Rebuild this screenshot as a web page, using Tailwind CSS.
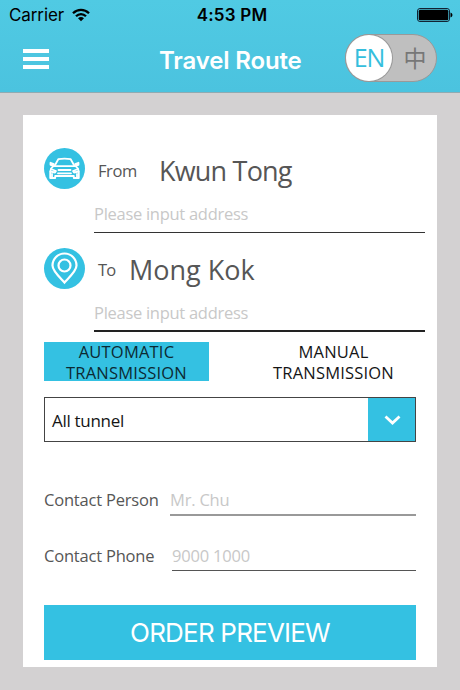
<!DOCTYPE html>
<html lang="en">
<head>
  <meta charset="UTF-8" />
  <meta name="viewport" content="width=device-width,initial-scale=1.0"/>
  <title>Travel Route</title>
  <script src="https://cdn.jsdelivr.net/npm/@tailwindcss/browser@4"></script>
</head>
<body class="w-[460px] h-[690px] overflow-hidden bg-[#d3d1d2] font-['Open_Sans','Noto_Sans_CJK_TC',sans-serif] text-[#565656] whitespace-nowrap">

  <header class="h-[93px] bg-linear-to-b from-[#50cae3] to-[#4bc3df] border-b border-[#8fabb2] font-['Inter',sans-serif]">
    <!-- Status bar -->
    <div class="h-[30px] grid grid-cols-3 items-center pl-[9px] pr-[7px] pt-px text-black text-[17px]">
      <div class="flex items-center gap-2">
        <span class="tracking-[-0.1px]">Carrier</span>
        <svg class="w-[18px] h-[14px] -mt-px" viewBox="0 0 18 14" fill="none" stroke="#000" stroke-width="2.3">
          <path d="M1 5.2C5.6.7 12.4.7 17 5.2"/>
          <path d="M4 8.3c2.9-2.9 7.1-2.9 10 0"/>
          <path d="M9 13.2 6 10.3c1.7-1.7 4.3-1.7 6 0z" fill="#000" stroke="none"/>
        </svg>
      </div>
      <span class="pl-[2px] text-center font-semibold tracking-[0.2px]">4:53 PM</span>
      <svg class="w-[36px] h-[14px] -mt-px justify-self-end" viewBox="0 0 36 14">
        <rect x=".5" y=".5" width="32" height="13" rx="2.5" fill="none" stroke="#123"/>
        <rect x="1.7" y="1.7" width="29.6" height="10.6" rx="1.5"/>
        <path d="M33.5 4.5c2.6.8 2.6 4.2 0 5z"/>
      </svg>
    </div>
    <!-- Title bar -->
    <div class="h-[62px] flex items-start">
      <button class="mt-[19px] ml-[23px] w-[26px] flex flex-col gap-1" aria-label="Menu">
        <span class="h-1 w-full bg-white"></span>
        <span class="h-1 w-full bg-white"></span>
        <span class="h-1 w-full bg-white"></span>
      </button>
      <h1 class="mt-[16px] ml-[110px] w-[143px] text-white text-[24px] leading-[30px] font-semibold tracking-[-0.15px]">Travel Route</h1>
      <button class="mt-[4px] ml-[43px] w-[92px] h-[48px] rounded-full bg-[#bfbfbf] border border-[#999] flex items-center font-['Open_Sans','Noto_Sans_CJK_TC',sans-serif]">
        <span class="w-[46px] h-[46px] rounded-full bg-white shadow-[0_0_0_1px_#999] text-[#35bedd] text-[25px] font-medium tracking-[-1px] flex items-center justify-center">EN</span>
        <span class="flex-1 text-center text-[#777] text-[23px] leading-[46px] pl-[2px]">中</span>
      </button>
    </div>
  </header>

  <main class="mt-[22px] mx-[23px] h-[552px] bg-white pt-[33px] pl-[21px]">
    <!-- From -->
    <section class="h-[99px]">
      <div class="h-[42px] flex items-center">
        <svg class="w-[41px] h-[41px] -mt-px shrink-0" viewBox="0 0 41 41" fill="none" stroke="#fff" stroke-linejoin="round" stroke-linecap="round">
          <circle cx="20.5" cy="20.5" r="20.5" fill="#34c1e2" stroke="none"/>
          <g stroke-width="1.8">
            <path d="M10.5 18l3.800-6.800q6.200-1 12.400 0l3.800 6.800"/>
            <path d="M9.800 16.200l-3.300-1.400v2l2.500.8M31.200 16.200l3.300-1.400v2l-2.500.8"/>
            <path d="M9.200 18.200q-2.800 2-3 5.300v6.500h5v-2h18.600v2h5v-6.500q-.2-3.300-3-5.300z"/>
            <path d="M7 21l5 2-1 1.500-4.500-1M34 21l-5 2 1 1.500 4.500-1"/>
            <path d="M14.500 22h12M14 25.300h13"/>
            <path d="M8 29.500v-3.500M33 29.500v-3.500"/>
          </g>
        </svg>
        <span class="ml-[13px] mt-[4px] w-[61px] text-[16.5px] leading-5 tracking-[-0.4px]">From</span>
        <span class="mt-[3px] text-[27px] leading-9 tracking-[-0.8px]">Kwun Tong</span>
      </div>
      <div class="ml-[50px] w-[331px] h-[43px] border-b border-[#333] pt-[12px] text-[16.5px] leading-6 tracking-[-0.28px] text-[#c8c8c8]">Please input address</div>
    </section>

    <!-- To -->
    <section class="h-[95px]">
      <div class="h-[42px] flex items-center">
        <svg class="w-[41px] h-[41px] shrink-0" viewBox="0 0 41 41" fill="none" stroke="#fff" stroke-width="2.2">
          <circle cx="20.5" cy="20.5" r="20.5" fill="#34c1e2" stroke="none"/>
          <path d="M20.500 34.500C16 29.500 8.500 23 8.500 17.500a12 12 0 0 1 24 0C32.500 23 25 29.500 20.500 34.500z"/>
          <circle cx="20.5" cy="17.5" r="6"/>
        </svg>
        <span class="ml-[13px] mt-[4px] w-[32px] text-[16.5px] leading-5 tracking-[-0.8px]">To</span>
        <span class="mt-[3px] -ml-px text-[27px] leading-9">Mong Kok</span>
      </div>
      <div class="ml-[50px] w-[331px] h-[43px] border-b-2 border-[#222] pt-[12px] text-[16.5px] leading-6 tracking-[-0.28px] text-[#c8c8c8]">Please input address</div>
    </section>

    <!-- Transmission -->
    <div class="w-[372px] flex justify-between text-center text-[16.5px] leading-[21px] tracking-[0.2px] text-[#151515]">
      <button class="w-[165px] h-[39px] bg-[#34c1e2] text-[#0c2a33]"><span class="block -my-1">AUTOMATIC<br>TRANSMISSION</span></button>
      <button class="w-[165px] h-[39px]"><span class="block -my-1">MANUAL<br>TRANSMISSION</span></button>
    </div>

    <!-- Tunnel select -->
    <div class="mt-[16px] w-[372px] h-[45px] border border-[#444] flex items-center">
      <span class="flex-1 pl-[7px] pt-[2px] text-[17px] tracking-[-0.3px] text-[#151515]">All tunnel</span>
      <span class="w-[47px] h-full bg-[#34c1e2] flex items-center justify-center">
        <svg class="w-[17px] h-[11px] mt-px ml-px" viewBox="0 0 17 11" fill="none" stroke="#fff" stroke-width="2.8"><path d="M1.500 1.500l7 6.500 7-6.500"/></svg>
      </span>
    </div>

    <!-- Contact -->
    <div class="mt-[42px] w-[372px] h-[32px] flex text-[16.5px] leading-[31px] tracking-[-0.2px]">
      <span class="w-[126px]">Contact Person</span>
      <span class="flex-1 border-b-2 border-[#999] text-[#c8c8c8]">Mr. Chu</span>
    </div>
    <div class="mt-[24px] w-[372px] h-[31px] flex text-[16.5px] leading-[31px] tracking-[-0.2px]">
      <span class="w-[128px]">Contact Phone</span>
      <span class="flex-1 border-b border-[#555] text-[#c8c8c8]">9000 1000</span>
    </div>

    <button class="mt-[34px] w-[372px] h-[55px] bg-[#34c1e2] text-white text-[26px] tracking-[-0.8px] font-['Inter',sans-serif]">ORDER PREVIEW</button>
  </main>

</body>
</html>
